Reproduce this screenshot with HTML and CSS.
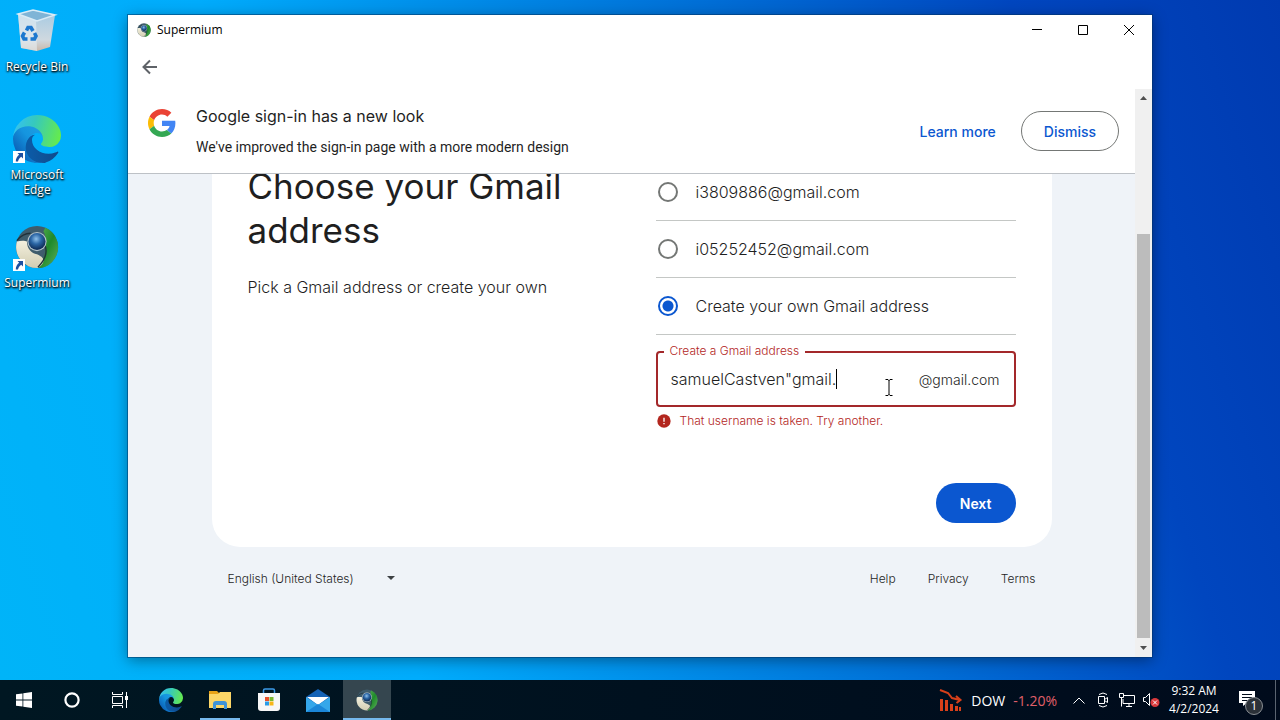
FILE: index.html
```html
<!DOCTYPE html>
<html lang="en">
<head>
    <meta charset="UTF-8">
    <meta name="viewport" content="width=device-width, initial-scale=1.0">
    <title>Supermium</title>
    <link rel="stylesheet" href="styles.css">
</head>
<body>

    <!-- Shared icons -->
    <svg class="sprite" aria-hidden="true">
        <defs>
            <linearGradient id="edgeA" x1="0.2" y1="0.5" x2="1" y2="0.5">
                <stop offset="0" stop-color="#0c59a4"/>
                <stop offset="1" stop-color="#114a8b"/>
            </linearGradient>
            <linearGradient id="edgeB" x1="0.9" y1="0.2" x2="0.2" y2="0.9">
                <stop offset="0" stop-color="#1b9de2"/>
                <stop offset="0.4" stop-color="#1595df"/>
                <stop offset="1" stop-color="#0a5cb4"/>
            </linearGradient>
            <linearGradient id="edgeC" x1="0" y1="0.4" x2="1" y2="0.6">
                <stop offset="0" stop-color="#35c1f1"/>
                <stop offset="0.4" stop-color="#36c9bd"/>
                <stop offset="1" stop-color="#66eb4b"/>
            </linearGradient>
            <radialGradient id="ball" cx="0.45" cy="0.35" r="0.6">
                <stop offset="0" stop-color="#8fc0ea"/>
                <stop offset="0.5" stop-color="#2b66a5"/>
                <stop offset="1" stop-color="#10305c"/>
            </radialGradient>
            <linearGradient id="green" x1="0" y1="0" x2="1" y2="1">
                <stop offset="0" stop-color="#5cb054"/>
                <stop offset="0.5" stop-color="#1f8a2b"/>
                <stop offset="1" stop-color="#5fae5a"/>
            </linearGradient>
            <linearGradient id="cream" x1="0" y1="0" x2="0" y2="1">
                <stop offset="0" stop-color="#f3f0de"/>
                <stop offset="1" stop-color="#d2cdb2"/>
            </linearGradient>
            <linearGradient id="bin" x1="0" y1="0" x2="0" y2="1">
                <stop offset="0" stop-color="#a9cbe2"/>
                <stop offset="0.7" stop-color="#cfd8df"/>
                <stop offset="1" stop-color="#cbb8a8"/>
            </linearGradient>
        </defs>
        <symbol id="edge" viewBox="0 0 256 256">
            <path fill="url(#edgeA)" d="M235.68 195.48c-3.43 1.79-6.97 3.38-10.57 4.76a101.82 101.82 0 0 1-35.73 6.43c-47.1 0-88.12-32.4-88.12-73.97a31.4 31.4 0 0 1 16.36-27.31c-42.6 1.79-53.55 46.18-53.55 72.19 0 73.53 67.77 81 82.37 81 7.87 0 19.75-2.29 26.87-4.54l1.31-.44a128.34 128.34 0 0 0 66.6-52.81 4 4 0 0 0-5.54-5.31z"/>
            <path fill="url(#edgeB)" d="M105.73 241.42a79.2 79.2 0 0 1-22.74-21.34 80.72 80.72 0 0 1 29.53-120c3.13-1.47 8.47-4.13 15.58-4a32.38 32.38 0 0 1 25.69 13 31.9 31.9 0 0 1 6.32 18.66c0-.21 24.48-79.64-80.04-79.64-43.92 0-80.05 41.68-80.05 78.24a130.15 130.15 0 0 0 12.11 56 128 128 0 0 0 156.38 67.11 75.55 75.55 0 0 1-62.78-8.03z"/>
            <path fill="url(#edgeC)" d="M152.33 148.86c-.81 1.05-3.3 2.5-3.3 5.66 0 2.61 1.7 5.12 4.72 7.23 14.38 10 41.49 8.68 41.56 8.68a59.56 59.56 0 0 0 30.27-8.35 61.38 61.38 0 0 0 30.43-52.88c.26-22.41-8-37.31-11.34-43.91C223.48 23.84 177.72 0 128.01 0A128 128 0 0 0 0 126.17c.48-36.54 36.8-66.05 80-66.05 3.5 0 23.46.34 42 10.07 16.34 8.58 24.9 18.94 30.85 29.21 6.18 10.67 7.28 24.15 7.28 29.52 0 5.37-2.74 13.33-7.8 19.94z"/>
        </symbol>
        <symbol id="supermium" viewBox="0 0 48 48">
            <circle cx="24" cy="24" r="23" fill="#3f5c6c"/>
            <path fill="url(#green)" d="M33 3a23 23 0 0 1-6 44l-3-3c7-5 10-12 9-21 0-7 1-12-2-16z"/>
            <path fill="url(#cream)" d="M2 18c4-1 9-1 11 0 0 8 5 13 11 14 4 2 8 4 7 8-1 3-3 5-6 7A23 23 0 0 1 2 18z"/>
            <path fill="none" stroke="#20313a" stroke-width="1.5" d="M2 17c4-5 9-8 15-8M33 23c3 9-2 17-8 23"/>
            <circle cx="24" cy="18" r="10.5" fill="#b4c3cb"/>
            <circle cx="24" cy="18" r="9.3" fill="url(#ball)"/>
        </symbol>
        <symbol id="shortcut" viewBox="0 0 12 12">
            <path fill="#fff" d="M0 0h12v12H0z"/>
            <path fill="#1e50a0" d="M4.5 2H10v5.500L8.200 5.700C6.500 7 5.500 8.300 5 10.500H2.800C2.700 7.500 4 5.400 6.200 3.700z"/>
        </symbol>
    </svg>

    <div class="desktop">
        <ul class="shortcuts">
            <li class="shortcut">
                <svg class="shortcut-icon" viewBox="0 0 48 48">
                    <path fill="url(#bin)" d="M5 7l37 1-5 32-13 4-16-3z"/>
                    <path fill="#e6eef4" opacity="0.6" d="M5 7l18 5 1 32-16-3z"/>
                    <path fill="#7fb4d6" stroke="#d9ebf6" stroke-width="1.500" d="M5 7l15-4 22 5-18 6z"/>
                    <path fill="none" stroke="#1c78cf" stroke-width="3.600" d="M13.500 23.500l1.500-3h3l2 3.500M21.500 26l1.500 3-1.500 3h-4M14.500 32h-3.500l-1.500-3 2-3.500"/>
                </svg>
                <span class="shortcut-name">Recycle Bin</span>
            </li>
            <li class="shortcut">
                <svg class="shortcut-icon"><use href="#edge"/></svg>
                <svg class="shortcut-arrow"><use href="#shortcut"/></svg>
                <span class="shortcut-name">Microsoft Edge</span>
            </li>
            <li class="shortcut">
                <svg class="shortcut-icon"><use href="#supermium" x="2" y="2" width="44" height="44"/></svg>
                <svg class="shortcut-arrow"><use href="#shortcut"/></svg>
                <span class="shortcut-name">Supermium</span>
            </li>
        </ul>

        <div class="window">
            <div class="titlebar">
                <svg class="titlebar-icon"><use href="#supermium"/></svg>
                <span class="titlebar-name">Supermium</span>
                <button class="window-button" aria-label="Minimize">
                    <svg width="10" height="10" viewBox="0 0 10 10"><path d="M0 4.500h10"/></svg>
                </button>
                <button class="window-button" aria-label="Maximize">
                    <svg width="10" height="10" viewBox="0 0 10 10"><path d="M.5.5h9v9h-9z"/></svg>
                </button>
                <button class="window-button" aria-label="Close">
                    <svg width="10" height="10" viewBox="0 0 10 10"><path d="M0 0l10 10M10 0L0 10"/></svg>
                </button>
            </div>

            <div class="toolbar">
                <button class="back" aria-label="Back">
                    <svg width="16" height="16" viewBox="0 0 16 16"><path d="M15 8H2M8 1.500L1.500 8 8 14.500"/></svg>
                </button>
            </div>

            <div class="view">
                <div class="page">
                    <header class="banner">
                        <svg class="google" viewBox="0 0 48 48">
                            <path fill="#ea4335" d="M24 9.500c3.540 0 6.710 1.220 9.210 3.600l6.850-6.850C35.900 2.380 30.470 0 24 0 14.620 0 6.510 5.380 2.560 13.220l7.980 6.190C12.430 13.720 17.740 9.500 24 9.500z"/>
                            <path fill="#4285f4" d="M46.980 24.550c0-1.570-.15-3.090-.38-4.550H24v9.020h12.940c-.58 2.960-2.260 5.480-4.780 7.180l7.730 6c4.510-4.180 7.090-10.360 7.090-17.650z"/>
                            <path fill="#fbbc05" d="M10.530 28.590c-.48-1.450-.76-2.990-.76-4.590s.27-3.140.76-4.590l-7.980-6.190C.92 16.460 0 20.120 0 24c0 3.880.92 7.540 2.560 10.780l7.970-6.190z"/>
                            <path fill="#34a853" d="M24 48c6.480 0 11.930-2.130 15.890-5.810l-7.730-6c-2.150 1.450-4.920 2.300-8.160 2.300-6.260 0-11.570-4.220-13.470-9.910l-7.980 6.190C6.510 42.620 14.620 48 24 48z"/>
                        </svg>
                        <div class="banner-text">
                            <p class="banner-title">Google sign-in has a new look</p>
                            <p class="banner-sub">We've improved the sign-in page with a more modern design</p>
                        </div>
                        <a class="learn" href="#">Learn more</a>
                        <button class="dismiss">Dismiss</button>
                    </header>

                    <!-- Scrolled to the end: content is anchored to the bottom -->
                    <main class="content">
                        <form class="card">
                            <div class="intro">
                                <h1>Choose your Gmail address</h1>
                                <p>Pick a Gmail address or create your own</p>
                            </div>
                            <div class="choices">
                                <label class="choice"><input type="radio" name="address">i3809886@gmail.com</label>
                                <label class="choice"><input type="radio" name="address">i05252452@gmail.com</label>
                                <label class="choice"><input type="radio" name="address" checked>Create your own Gmail address</label>
                                <div class="field">
                                    <label class="field-label" for="username">Create a Gmail address</label>
                                    <input class="field-input" id="username" type="text" value="samuelCastven&quot;gmail." spellcheck="false">
                                    <span class="caret"></span>
                                    <span class="field-suffix">@gmail.com</span>
                                </div>
                                <p class="error">
                                    <svg width="16" height="16" viewBox="0 0 24 24"><path fill="#b3261e" d="M12 2a10 10 0 1 0 0 20 10 10 0 0 0 0-20z"/><path fill="#fff" d="M11 7h2v6h-2zM11 15h2v2h-2z"/></svg>
                                    That username is taken. Try another.
                                </p>
                                <button class="next" type="button">Next</button>
                            </div>
                        </form>
                        <footer class="footer">
                            <div class="language">
                                <select aria-label="Language">
                                    <option>English (United States)</option>
                                </select>
                                <svg width="8" height="4" viewBox="0 0 8 4"><path fill="#3c4043" d="M0 0h8L4 4z"/></svg>
                            </div>
                            <nav class="links">
                                <a href="#">Help</a>
                                <a href="#">Privacy</a>
                                <a href="#">Terms</a>
                            </nav>
                        </footer>
                    </main>
                </div>

                <div class="scrollbar">
                    <svg width="17" height="17" viewBox="0 0 17 17"><path fill="#505050" d="M5 11h7L8.500 7z"/></svg>
                    <div class="track"><div class="thumb"></div></div>
                    <svg width="17" height="19" viewBox="0 0 17 19"><path fill="#505050" d="M5 8h7l-3.500 4z"/></svg>
                </div>
            </div>
        </div>

        <!-- Mouse pointer -->
        <svg class="pointer" width="8" height="17" viewBox="0 0 8 17"><path fill="none" stroke="#000" d="M.5.500h2.500l1 1 1-1h2.500M4 1v15M.5 16.500h2.500l1-1 1 1h2.500"/></svg>
    </div>

    <div class="taskbar">
        <div class="system">
            <button class="task" aria-label="Start">
                <svg width="16" height="16" viewBox="0 0 16 16"><path fill="#fff" d="M0 2.300L6.500 1.400v6.200H0zM7.300 1.300L16 0v7.600H7.300zM0 8.400h6.500v6.200L0 13.700zM7.300 8.400H16V16l-8.700-1.300z"/></svg>
            </button>
            <button class="task" aria-label="Cortana">
                <svg width="16" height="16" viewBox="0 0 16 16"><circle cx="8" cy="8" r="6.600" fill="none" stroke="#fff" stroke-width="2.200"/></svg>
            </button>
            <button class="task" aria-label="Task View">
                <svg width="16" height="16" viewBox="0 0 16 16"><path fill="none" stroke="#fff" d="M.5 0v2.500h10V0M.5 4.500h10v7H.5zM.5 16v-2.500h10V16M14.500 0v16"/><path fill="#fff" d="M13 4h3v4h-3z"/></svg>
            </button>
        </div>
        <div class="apps">
            <button class="task" aria-label="Microsoft Edge">
                <svg width="24" height="24"><use href="#edge"/></svg>
            </button>
            <button class="task open" aria-label="File Explorer">
                <svg width="22" height="18" viewBox="0 0 22 18"><path fill="#e8a317" d="M0 0h8l2 2v4H0z"/><path fill="#fcd667" d="M0 3h9l2-2h11v16H0z"/><path fill="#3f93d6" d="M4 18v-5a3 3 0 0 1 3-3h8a3 3 0 0 1 3 3v5h-3v-4H7v4z"/></svg>
            </button>
            <button class="task" aria-label="Microsoft Store">
                <svg width="24" height="24" viewBox="0 0 24 24"><path fill="none" stroke="#3b9ae8" stroke-width="1.500" d="M6.500 6V2.500q0-1.500 1.500-1.500h8q1.500 0 1.500 1.500V6"/><path fill="#f7f7f7" d="M1 5h22v15q0 3-3 3H4q-3 0-3-3z"/><path fill="#e8502a" d="M8 9h4v4H8z"/><path fill="#7cb82f" d="M12.500 9h4v4h-4z"/><path fill="#2a9be8" d="M8 13.500h4v4H8z"/><path fill="#f8b617" d="M12.500 13.500h4v4h-4z"/></svg>
            </button>
            <button class="task" aria-label="Mail">
                <svg width="24" height="23" viewBox="0 0 24 23"><path fill="#1462b5" d="M0 8l12-8 12 8v14H0z"/><path fill="#fff" d="M1 8h22L12 16z"/><path fill="#35a7ea" d="M0 8l12 8L24 8v15H0z"/><path fill="#1b86d8" d="M0 23l12-8L24 23z"/></svg>
            </button>
            <button class="task active" aria-label="Supermium">
                <svg width="22" height="22"><use href="#supermium"/></svg>
            </button>
        </div>

        <div class="tray">
            <button class="news">
                <svg width="24" height="22" viewBox="0 0 24 22"><path fill="none" stroke="#d8401a" stroke-width="2" d="M1 1l8 3 4 5 8 2M17 7l4.500 4-4 3"/><path fill="#d8401a" d="M1 10h3v12H1zM6 11h3v11H6zM11 15h3v7h-3zM16 17h3v5h-3zM20 18h2v4h-2z"/></svg>
                <span>DOW</span>
                <span class="loss">-1.20%</span>
            </button>
            <button class="tray-button" aria-label="Show hidden icons">
                <svg width="12" height="7" viewBox="0 0 12 7"><path d="M.5 6.500L6 1l5.500 5.500"/></svg>
            </button>
            <button class="tray-button" aria-label="Meet Now">
                <svg width="12" height="16" viewBox="0 0 12 16"><path d="M2 2.500q4-3 8 0M2 13.500q4 3 8 0M1.500 4.500h6v7h-6zM7.500 7.500l3-2v5l-3-2"/></svg>
            </button>
            <button class="tray-button" aria-label="Network">
                <svg width="16" height="14" viewBox="0 0 16 14"><path d="M5 2.500h10.500v8H4V6M.5.500h4v4h-4zM2.500 5v8.500M7 13.500h6M10 11v2"/></svg>
            </button>
            <button class="tray-button" aria-label="Volume">
                <svg width="18" height="16" viewBox="0 0 18 16"><path d="M1.500 5.500h2l4-4v12l-4-4h-2z"/><circle cx="13" cy="10.500" r="4.500" fill="#d8393c" stroke="none"/><path d="M11 8.500l4 4M15 8.500l-4 4"/></svg>
            </button>
            <button class="clock"><time>9:32 AM</time><time>4/2/2024</time></button>
            <button class="notifications" aria-label="Notifications">
                <svg width="16" height="15" viewBox="0 0 16 15"><path fill="#fff" d="M0 0h16v12h-8l-4 3v-3H0z"/><path stroke="#000b18" d="M3 3.500h10M3 6.500h10M3 9.500h7"/></svg>
                <span class="badge">1</span>
            </button>
            <button class="peek" aria-label="Show desktop"></button>
        </div>
    </div>

</body>
</html>
```
FILE: styles.css
```css
* {
    box-sizing: border-box;
}

body {
    display: flex;
    flex-direction: column;
    height: 100vh;
    margin: 0;
    overflow: hidden;
    font-family: "Open Sans", "Noto Sans", sans-serif;
    font-size: 12px;
}

button {
    padding: 0;
    border: none;
    background: none;
    color: inherit;
    font: inherit;
    cursor: pointer;
}

h1, p, ul {
    margin: 0;
    padding: 0;
}

.sprite {
    position: absolute;
    width: 0;
    height: 0;
}

/* Desktop */
.desktop {
    position: relative;
    flex: 1;
    min-height: 0;
    background: linear-gradient(72deg, #00b4f8 0%, #00acfc 28%, #0092ec 42%, #006ed6 62%, #0046bf 82%, #003ab0 100%);
}

.shortcuts {
    display: flex;
    flex-direction: column;
    width: 74px;
    padding-top: 7px;
    list-style: none;
}

.shortcut {
    position: relative;
    display: flex;
    flex-direction: column;
    align-items: center;
    height: 108px;
}

.shortcut-icon {
    width: 48px;
    height: 48px;
}

.shortcut-arrow {
    position: absolute;
    top: 36px;
    left: 13px;
    width: 12px;
    height: 12px;
}

.shortcut-name {
    margin-top: 4px;
    color: #fff;
    line-height: 15px;
    text-align: center;
    text-shadow: 0 1px 2px #000, 1px 1px 2px #000;
}

/* Browser window */
.window {
    position: absolute;
    top: 15px;
    right: 128px;
    bottom: 23px;
    left: 128px;
    display: flex;
    flex-direction: column;
    background: #fff;
    box-shadow: 0 0 0 1px rgba(0, 50, 100, 0.5), 0 3px 14px rgba(0, 0, 0, 0.4);
}

.titlebar {
    display: flex;
    align-items: center;
    height: 29px;
    padding-left: 9px;
}

.titlebar-icon {
    width: 14px;
    height: 14px;
    margin-right: 6px;
}

.titlebar-name {
    flex: 1;
}

.window-button {
    display: flex;
    align-items: center;
    justify-content: center;
    width: 46px;
    height: 28px;
}

.window-button svg {
    fill: none;
    stroke: #000;
}

.toolbar {
    display: flex;
    align-items: center;
    height: 45px;
    padding-left: 14px;
}

.back {
    display: flex;
}

.back svg {
    fill: none;
    stroke: #5f6368;
    stroke-width: 2;
}

.view {
    display: flex;
    flex: 1;
    min-height: 0;
}

.page {
    display: flex;
    flex: 1;
    flex-direction: column;
    background: #eff3f8;
    color: #1f1f1f;
    font-family: Inter, Roboto, sans-serif;
}

.banner {
    display: flex;
    align-items: center;
    height: 85px;
    padding: 0 16px 0 20px;
    border-bottom: 1px solid #bdc1c6;
    background: #fff;
}

.google {
    width: 28px;
    height: 28px;
    margin-bottom: 16px;
}

.banner-text {
    flex: 1;
    margin-left: 20px;
}

.banner-title {
    font-size: 16px;
    line-height: 22px;
}

.banner-sub {
    margin-top: 10px;
    font-family: Roboto, sans-serif;
    font-size: 14px;
    line-height: 20px;
}

.learn, .dismiss {
    color: #0b57d0;
    font-size: 14px;
    font-weight: 500;
    text-decoration: none;
}

.dismiss {
    height: 40px;
    margin-left: 25px;
    padding: 0 22px;
    border: 1px solid #747775;
    border-radius: 20px;
}

.content {
    display: flex;
    flex: 1;
    flex-direction: column;
    align-items: center;
    justify-content: flex-end;
    min-height: 0;
    overflow: hidden;
}

.card {
    display: grid;
    grid-template-columns: 1fr 1fr;
    flex-shrink: 0;
    gap: 48px;
    width: 100%;
    max-width: 840px;
    padding: 36px 36px 24px;
    border-radius: 28px;
    background: #fff;
    font-size: 16px;
    font-weight: 300;
}

.card h1 {
    font-size: 35px;
    font-weight: 400;
    line-height: 44px;
}

.intro p {
    margin-top: 24px;
    line-height: 22px;
}

.choices {
    display: flex;
    flex-direction: column;
}

.choice {
    display: flex;
    align-items: center;
    gap: 18px;
    height: 57px;
    padding-left: 2px;
    border-bottom: 1px solid #c4c7c5;
}

.choice input {
    width: 20px;
    height: 20px;
    margin: 0;
    border: 2px solid #747775;
    border-radius: 50%;
    appearance: none;
}

.choice input:checked {
    border-color: #0b57d0;
    background: radial-gradient(#0b57d0 5px, #fff 6px);
}

.field {
    position: relative;
    display: flex;
    align-items: center;
    height: 56px;
    margin-top: 16px;
    padding: 0 14px 0 13px;
    border: 2px solid #a3282a;
    border-radius: 4px;
}

.field-label {
    position: absolute;
    top: -10px;
    left: 6px;
    padding: 0 6px;
    background: #fff;
    color: #b3261e;
    font-size: 12px;
    line-height: 16px;
}

.field-input {
    min-width: 0;
    padding: 0;
    border: none;
    outline: none;
    color: #1f1f1f;
    font: inherit;
    field-sizing: content;
}

.caret {
    width: 1px;
    height: 20px;
    background: #000;
}

.field-suffix {
    margin-left: auto;
    font-size: 14px;
}

.error {
    display: flex;
    align-items: center;
    gap: 8px;
    margin-top: 6px;
    color: #b3261e;
    font-size: 12px;
    line-height: 16px;
}

.next {
    align-self: flex-end;
    height: 40px;
    margin-top: 54px;
    padding: 0 24px;
    border-radius: 20px;
    background: #0b57d0;
    color: #fff;
    font-size: 14px;
    font-weight: 600;
}

.footer {
    display: flex;
    flex-shrink: 0;
    align-items: center;
    justify-content: space-between;
    width: 100%;
    max-width: 840px;
    height: 62px;
    margin-bottom: 48px;
    padding: 0 16px;
    font-weight: 300;
}

.language {
    display: flex;
    align-items: center;
    gap: 32px;
}

.language select {
    padding: 0;
    border: none;
    background: none;
    color: #1f1f1f;
    font: inherit;
    appearance: none;
}

.links {
    display: flex;
    gap: 32px;
}

.links a {
    color: #1f1f1f;
    text-decoration: none;
}

.scrollbar {
    display: flex;
    flex-direction: column;
    width: 17px;
    background: #f0f0f0;
}

.track {
    display: flex;
    flex: 1;
    flex-direction: column;
    justify-content: flex-end;
    padding: 0 2px;
}

.thumb {
    height: 76%;
    background: #bcbcbc;
}

.pointer {
    position: absolute;
    top: 379px;
    left: 885px;
}

/* Taskbar */
.taskbar {
    display: flex;
    justify-content: space-between;
    height: 40px;
    background: linear-gradient(90deg, #001722, #00111f 50%, #000b1c);
    color: #fff;
}

.system, .apps, .tray {
    display: flex;
}

.apps {
    gap: 1px;
    margin-right: auto;
    margin-left: 3px;
}

.task {
    display: flex;
    align-items: center;
    justify-content: center;
    width: 48px;
}

.open {
    background: linear-gradient(#76b9ed, #76b9ed) bottom / 40px 2px no-repeat;
}

.active {
    background: linear-gradient(#76b9ed, #76b9ed) bottom / 100% 2px no-repeat #35464f;
}

.news {
    display: flex;
    align-items: center;
    gap: 8px;
    margin-right: 10px;
    font-size: 14px;
}

.loss {
    color: #e0606a;
}

.tray-button {
    display: flex;
    align-items: center;
    justify-content: center;
    width: 24px;
}

.tray-button svg {
    fill: none;
    stroke: #fff;
}

.clock {
    display: flex;
    flex-direction: column;
    align-items: center;
    justify-content: center;
    width: 62px;
    line-height: 18px;
}

.notifications {
    position: relative;
    width: 44px;
    margin-right: 6px;
}

.badge {
    position: absolute;
    right: 6px;
    bottom: 5px;
    width: 18px;
    border: 1px solid #8a8f94;
    border-radius: 50%;
    background: #2b3138;
    font-size: 12px;
    line-height: 16px;
}

.peek {
    width: 5px;
    border-left: 1px solid #5a6470;
}
```
